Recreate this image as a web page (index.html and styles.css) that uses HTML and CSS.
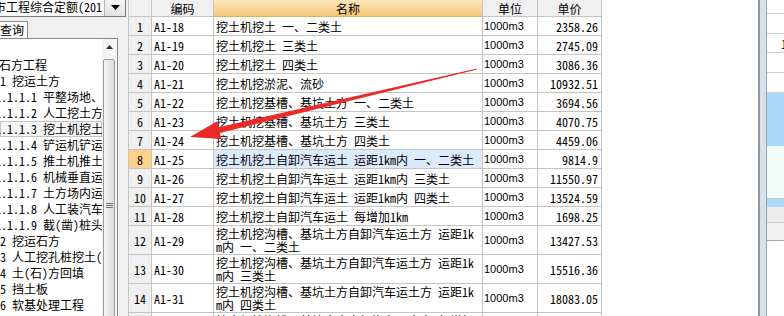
FILE: index.html
```html
<!DOCTYPE html>
<html lang="zh-CN">
<head>
    <meta charset="UTF-8">
    <meta name="viewport" content="width=device-width, initial-scale=1.0">
    <title>定额库 - 土石方工程</title>
    <link rel="stylesheet" href="styles.css">
</head>
<body>
<div class="left">
    <div class="combo">
        <span class="combo-text">市工程综合定额(201</span>
        <span class="combo-btn">
            <svg width="9" height="5" viewBox="0 0 9 5"><polygon points="0,0 9,0 4.5,5" fill="#000"/></svg>
        </span>
    </div>
    <div class="tabs"><span class="tab">查询</span></div>
    <div class="treebox">
        <ul class="tree">
            <li class="l0">土石方工程</li>
            <li class="l1">1 挖运土方</li>
            <li class="l2">1.1.1.1 平整场地、原土打夯</li>
            <li class="l2">1.1.1.2 人工挖土方、淤泥</li>
            <li class="l2 selected">1.1.1.3 挖土机挖土方</li>
            <li class="l2">1.1.1.4 铲运机铲运土方</li>
            <li class="l2">1.1.1.5 推土机推土方</li>
            <li class="l2">1.1.1.6 机械垂直运输</li>
            <li class="l2">1.1.1.7 土方场内运输</li>
            <li class="l2">1.1.1.8 人工装汽车运土</li>
            <li class="l2">1.1.1.9 截(凿)桩头</li>
            <li class="l1">2 挖运石方</li>
            <li class="l1">3 人工挖孔桩挖土(石)方</li>
            <li class="l1">4 土(石)方回填</li>
            <li class="l1">5 挡土板</li>
            <li class="l1">6 软基处理工程</li>
        </ul>
        <div class="vscroll">
            <div class="arrow-up">
                <svg width="7" height="4" viewBox="0 0 7 4"><polygon points="3.5,0 7,4 0,4" fill="#333"/></svg>
            </div>
            <div class="thumb">
                <svg width="7" height="5" viewBox="0 0 7 5">
                    <rect x="0" y="0" width="7" height="1" fill="#777"/>
                    <rect x="0" y="2" width="7" height="1" fill="#777"/>
                    <rect x="0" y="4" width="7" height="1" fill="#777"/>
                </svg>
            </div>
        </div>
    </div>
</div>

<div class="grid">
    <table class="quota">
        <thead>
        <tr>
            <th class="rn"></th>
            <th class="code">编码</th>
            <th class="name sorted">名称</th>
            <th class="unit">单位</th>
            <th class="price">单价</th>
        </tr>
        </thead>
        <tbody>
        <tr><td class="rn">1</td><td>A1-18</td><td>挖土机挖土 一、二类土</td><td class="unit">1000m3</td><td class="price">2358.26</td></tr>
        <tr><td class="rn">2</td><td>A1-19</td><td>挖土机挖土 三类土</td><td class="unit">1000m3</td><td class="price">2745.09</td></tr>
        <tr><td class="rn">3</td><td>A1-20</td><td>挖土机挖土 四类土</td><td class="unit">1000m3</td><td class="price">3086.36</td></tr>
        <tr><td class="rn">4</td><td>A1-21</td><td>挖土机挖淤泥、流砂</td><td class="unit">1000m3</td><td class="price">10932.51</td></tr>
        <tr><td class="rn">5</td><td>A1-22</td><td>挖土机挖基槽、基坑土方 一、二类土</td><td class="unit">1000m3</td><td class="price">3694.56</td></tr>
        <tr><td class="rn">6</td><td>A1-23</td><td>挖土机挖基槽、基坑土方 三类土</td><td class="unit">1000m3</td><td class="price">4070.75</td></tr>
        <tr><td class="rn">7</td><td>A1-24</td><td>挖土机挖基槽、基坑土方 四类土</td><td class="unit">1000m3</td><td class="price">4459.06</td></tr>
        <tr class="current"><td class="rn">8</td><td>A1-25</td><td class="hl">挖土机挖土自卸汽车运土 运距1km内 一、二类土</td><td class="unit">1000m3</td><td class="price">9814.9</td></tr>
        <tr><td class="rn">9</td><td>A1-26</td><td>挖土机挖土自卸汽车运土 运距1km内 三类土</td><td class="unit">1000m3</td><td class="price">11550.97</td></tr>
        <tr><td class="rn">10</td><td>A1-27</td><td>挖土机挖土自卸汽车运土 运距1km内 四类土</td><td class="unit">1000m3</td><td class="price">13524.59</td></tr>
        <tr><td class="rn">11</td><td>A1-28</td><td>挖土机挖土自卸汽车运土 每增加1km</td><td class="unit">1000m3</td><td class="price">1698.25</td></tr>
        <tr class="two"><td class="rn">12</td><td>A1-29</td><td>挖土机挖沟槽、基坑土方自卸汽车运土方 运距1k<br>m内 一、二类土</td><td class="unit">1000m3</td><td class="price">13427.53</td></tr>
        <tr class="two"><td class="rn">13</td><td>A1-30</td><td>挖土机挖沟槽、基坑土方自卸汽车运土方 运距1k<br>m内 三类土</td><td class="unit">1000m3</td><td class="price">15516.36</td></tr>
        <tr class="two"><td class="rn">14</td><td>A1-31</td><td>挖土机挖沟槽、基坑土方自卸汽车运土方 运距1k<br>m内 四类土</td><td class="unit">1000m3</td><td class="price">18083.05</td></tr>
        <tr class="two"><td class="rn">15</td><td>A1-32</td><td>挖土机挖沟槽、基坑土方自卸汽车运土方 每增加<br>1km</td><td class="unit">1000m3</td><td class="price">1698.25</td></tr>
        </tbody>
    </table>
</div>

<div class="splitter"></div>

<div class="right">
    <div class="rrow first"></div>
    <div class="rrow"></div>
    <div class="rrow short"><span class="rnum">1</span></div>
    <div class="rrow"></div>
    <div class="rrow"></div>
    <div class="rblue"></div>
    <div class="rmint"></div>
    <div class="rblue small"></div>
    <div class="rgray"></div>
    <div class="rgray light"></div>
</div>

<!-- annotation arrow drawn over the grid -->
<svg class="arrow" width="784" height="316" viewBox="0 0 784 316">
    <polygon points="476.9,68.6 218.5,127.2 217.1,121.3 190,137 221.3,138.9 219.9,133.0 477.1,69.4" fill="#ec2a2a"/>
</svg>
</body>
</html>
```

FILE: styles.css
```css
* {
    box-sizing: border-box;
}
body {
    margin: 0;
    width: 784px;
    height: 316px;
    overflow: hidden;
    display: flex;
    font-family: "Noto Sans CJK SC", sans-serif;
    font-size: 12px;
    font-feature-settings: "hwid";
    color: #000;
    background: #fff;
}

/* left: library selector and chapter tree */
.left {
    width: 128px;
    flex: none;
    display: flex;
    flex-direction: column;
    background: #f0f0f0;
    overflow: hidden;
}
.combo {
    flex: none;
    height: 20px;
    width: 128px;
    margin: -3px 0 0 -2px;
    border: 1px solid #7a7a7a;
    background: #fff;
    display: flex;
    align-items: center;
    white-space: nowrap;
    overflow: hidden;
}
.combo-text {
    flex: 1;
    overflow: hidden;
    margin-left: -5px;
    line-height: 16px;
}
.combo-btn {
    flex: none;
    width: 21px;
    height: 100%;
    display: flex;
    align-items: center;
    justify-content: center;
    background: linear-gradient(#f6f6f6, #e2e2e2);
    border-left: 1px solid #b4b4b4;
}
.tabs {
    flex: none;
    height: 21px;
    display: flex;
    align-items: flex-end;
}
.tab {
    height: 17px;
    margin-left: -3px;
    padding: 0 3px 0 2px;
    line-height: 16px;
    border: 1px solid #8d8d8d;
    border-bottom: none;
    background: #fbfbfb;
}
.treebox {
    flex: 1;
    width: 118px;
    display: flex;
    background: #fff;
    border-top: 1px solid #828790;
    border-right: 1px solid #828790;
    overflow: hidden;
}
.tree {
    flex: 1;
    margin: 0;
    padding: 18px 0 0;
    list-style: none;
    overflow: hidden;
}
.tree li {
    height: 16px;
    line-height: 16px;
    white-space: nowrap;
}
.tree .l0 {
    margin-left: -13px;
}
.tree .l1 {
    margin-left: 0;
}
.tree .l2 {
    margin-left: -5px;
}
.tree .selected {
    margin-left: 0;
    background: #f6f6f6;
    box-shadow: inset 0 0 0 1px #c4c4c4;
    text-indent: -5px;
}
.vscroll {
    width: 15px;
    flex: none;
    display: flex;
    flex-direction: column;
    background: #f4f4f4;
    overflow: hidden;
}
.arrow-up {
    height: 19px;
    flex: none;
    padding-top: 6px;
    display: flex;
    justify-content: center;
    align-items: flex-start;
}
.thumb {
    flex: none;
    height: 292px;
    margin: 1px 2px 0 1px;
    border: 1px solid #9c9c9c;
    border-radius: 2px;
    background: linear-gradient(to right, #f6f6f6, #dadada);
    display: flex;
    align-items: center;
    justify-content: center;
}

/* quota grid */
.grid {
    flex: 1;
    background: #fff;
    overflow: hidden;
}
.quota {
    border-collapse: separate;
    border-spacing: 0;
    table-layout: fixed;
    width: 474px;
}
.quota th,
.quota td {
    padding: 0 2px;
    border-right: 1px solid #c4c4c4;
    border-bottom: 1px solid #c4c4c4;
    line-height: 13px;
    white-space: nowrap;
    overflow: hidden;
    vertical-align: middle;
    text-align: left;
    font-weight: normal;
}
.quota thead tr {
    height: 17px;
}
.quota tbody tr {
    height: 19px;
}
.quota tbody tr.two {
    height: 29px;
}
.quota th {
    background: #f0f0f0;
    text-align: center;
}
.quota th.sorted {
    background: linear-gradient(#fde6bb, #f6c677);
    border-bottom-color: #e0b060;
}
.quota .rn {
    width: 24px;
    border-left: 1px solid #c4c4c4;
    background: #f0f0f0;
    text-align: center;
    padding: 0;
}
.quota .code {
    width: 62px;
}
.quota .name {
    width: 269px;
}
.quota th.unit {
    width: 55px;
}
.quota th.price {
    width: 64px;
}
.quota td.unit {
    font-family: "Liberation Sans", Arial, sans-serif;
    font-size: 11px;
    padding-left: 1px;
}
.quota td.price {
    text-align: right;
    padding-right: 3px;
}
.quota tr.current .rn {
    background: #fed28b;
}
.quota td.hl {
    background: #dcebfb;
}

/* right-hand panel */
.splitter {
    width: 9px;
    flex: none;
    border-left: 2px solid #979797;
    border-right: 1px solid #9aa4ae;
    background: #d5e1ec;
}
.right {
    width: 17px;
    flex: none;
    display: flex;
    flex-direction: column;
    background: #fff;
}
.rrow {
    height: 20px;
    flex: none;
    border-bottom: 1px solid #d0d0d0;
    white-space: nowrap;
    overflow: hidden;
    line-height: 19px;
}
.rrow.first {
    height: 14px;
}
.rrow.short {
    height: 19px;
}
.rnum {
    padding-left: 14px;
}
.rblue {
    height: 53px;
    flex: none;
    background: #a9d9f6;
}
.rblue.small {
    height: 8px;
}
.rmint {
    height: 53px;
    flex: none;
    background: #f1fbf7;
    border-bottom: 1px solid #c8c8c8;
}
.rgray {
    height: 16px;
    flex: none;
    background: #ececec;
    border-bottom: 1px solid #c8c8c8;
}
.rgray.light {
    height: 18px;
    background: #f0f0f0;
    border-bottom-color: #a8a8a8;
}

.arrow {
    position: absolute;
    left: 0;
    top: 0;
    pointer-events: none;
}
```
